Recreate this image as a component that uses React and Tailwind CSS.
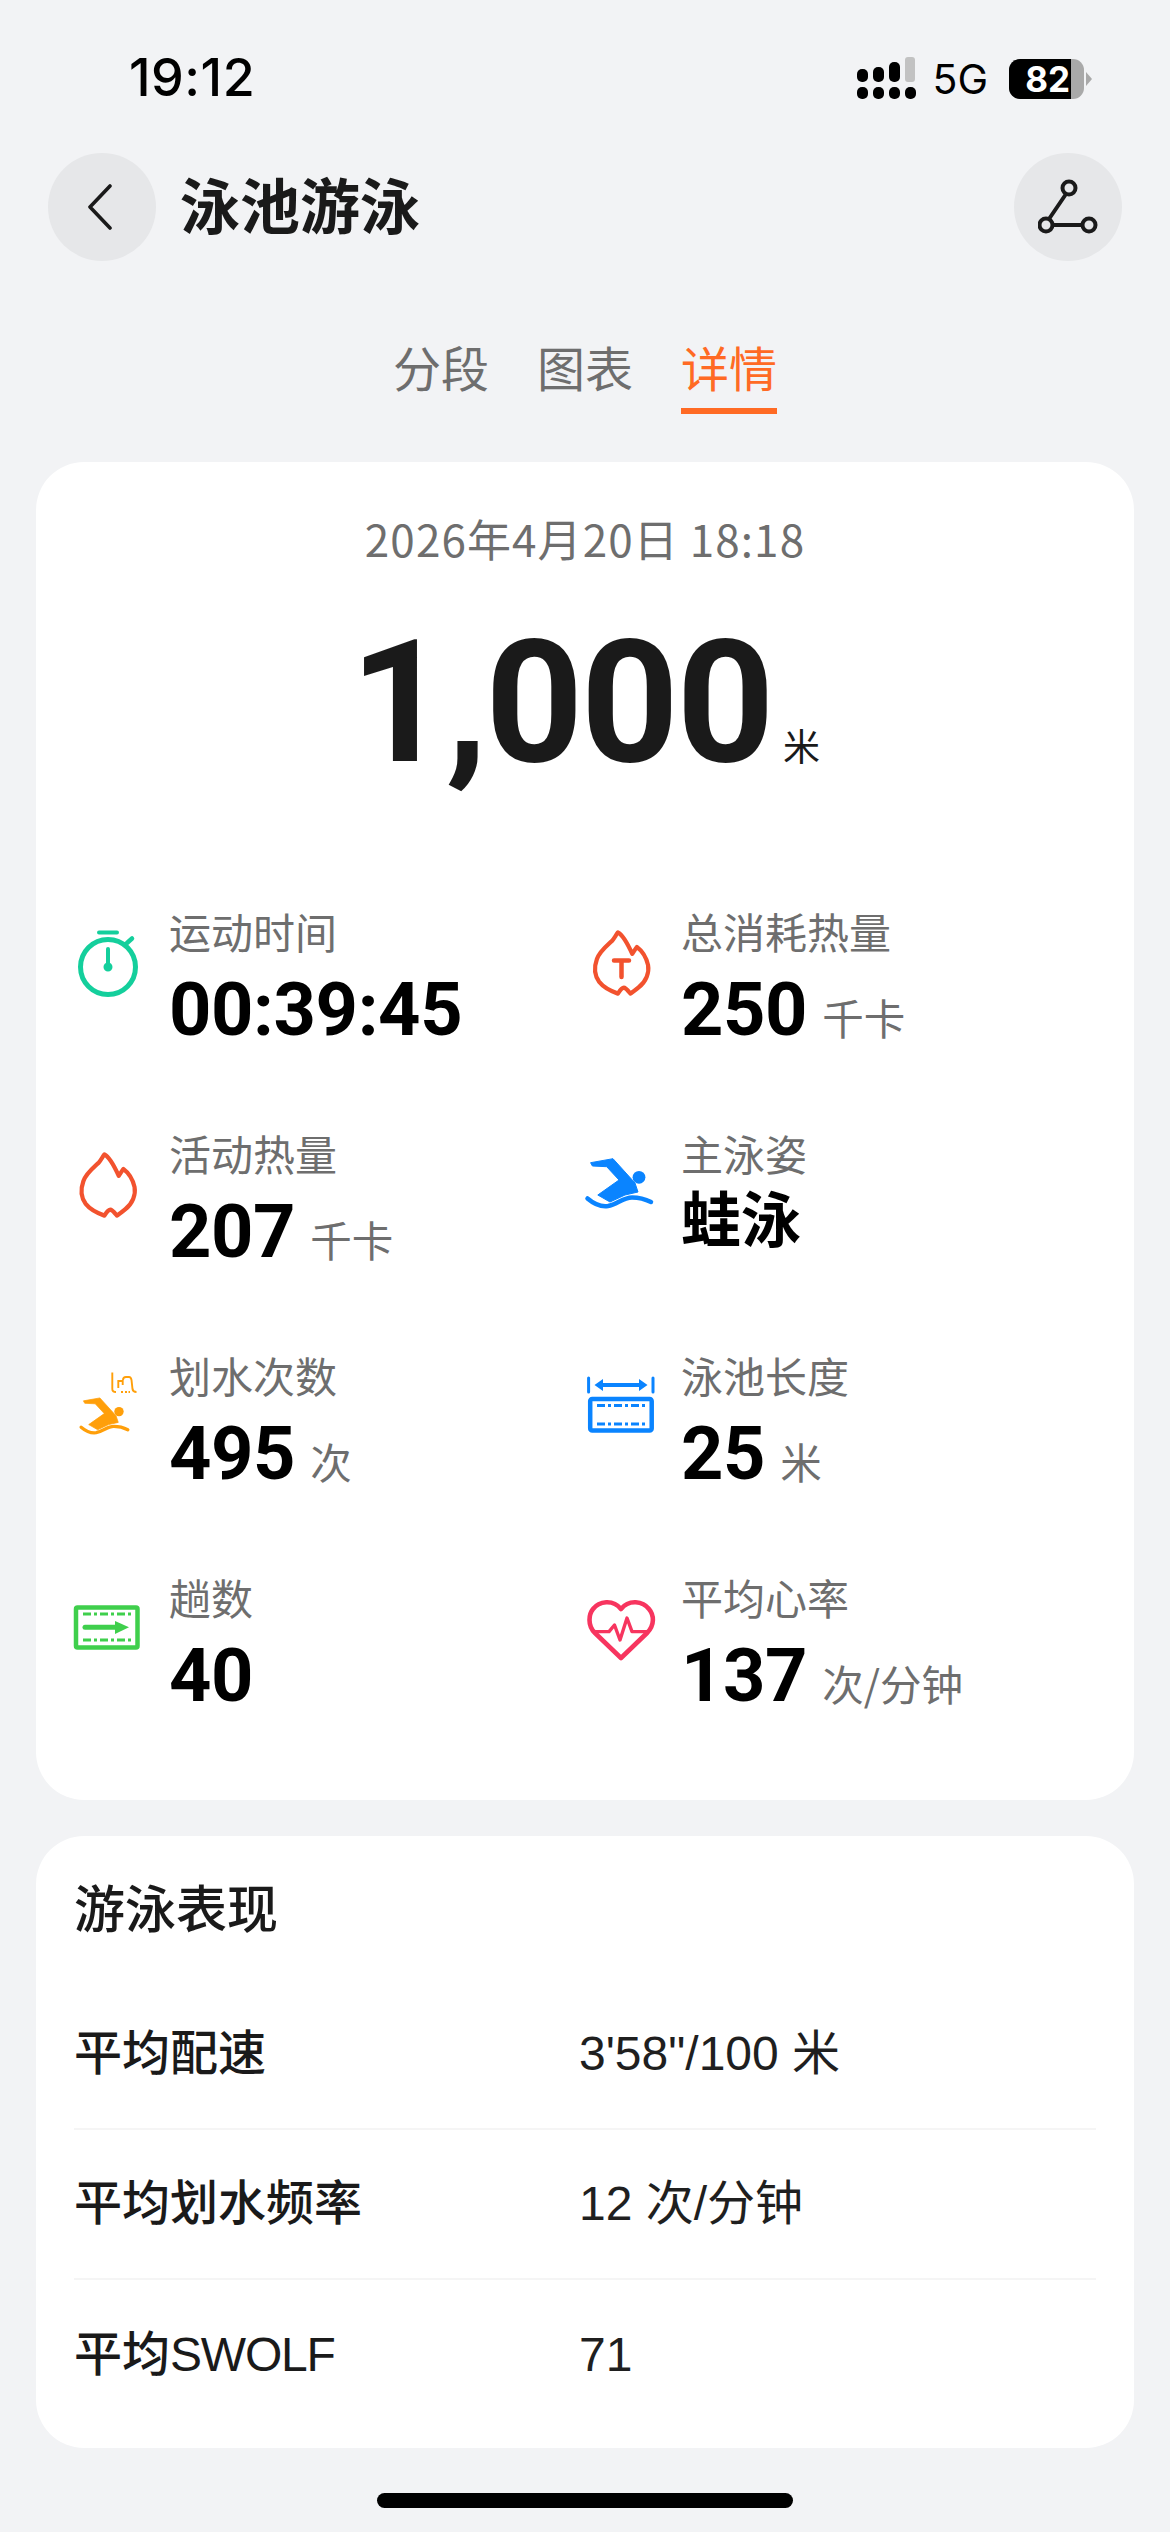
const CJK = '"Noto Sans CJK SC", sans-serif';
const MIX = '"Liberation Sans", "Noto Sans CJK SC", sans-serif';

function Swimmer({ color }) {
  return (
    <g fill={color}>
      <path d="M5.6 10.7 L28 6.7 L50 31 L53 40 L40 43 L25 50 L12.8 43 L34 28 L21.7 14.7 L7.4 14 Z" strokeLinejoin="round" stroke={color} strokeWidth="1" />
      <circle cx="54" cy="25.3" r="6.4" />
      <path d="M2.5 46.5 C9 52 16 55 23 54 C32 52.5 38 45.5 47 45.5 C54 45.5 60 47 66 50" fill="none" stroke={color} strokeWidth="4.5" strokeLinecap="round" />
    </g>
  );
}

const flame = "M31.6 1.5 C37 4 42 13 47 23.5 C49 21 50.5 18 52 16.5 C57 20 62 27 64 35 C65.5 43 62 52 54 58 C50 61 47 63.5 45 64.5 C42 61 40 58.5 38 58.5 C35.5 58.5 33.5 61.5 31.6 64.5 C24 62 16 58 11.5 52.5 C6.5 46 6 37 9 29 C12 21 20 15 25 10.5 C27.5 8 29.5 4 31.6 1.5 Z";

const icons = {
  watch: (
    <g fill="none" stroke="#14cf9c" strokeWidth="5" strokeLinecap="round">
      <circle cx="36" cy="37" r="27.5" />
      <path d="M27 2.5 H45" strokeWidth="4" />
      <path d="M36 19 V37" strokeWidth="4" />
      <path d="M55 13 L60 8.5" strokeWidth="4.5" />
      <circle cx="36" cy="37" r="2" fill="#14cf9c" />
    </g>
  ),
  flameT: (
    <g fill="none" stroke="#f2522e" strokeWidth="4.5" strokeLinejoin="round" strokeLinecap="round">
      <path d={flame} transform="translate(38 33) scale(.93 .97) translate(-36 -33)" />
      <path d="M30 30.5 H45 M37.5 30.5 V47" />
    </g>
  ),
  flame: <path d={flame} transform="translate(36.5 33) scale(.93 .97) translate(-36 -33)" fill="none" stroke="#f2522e" strokeWidth="4.5" strokeLinejoin="round" />,
  swim: <g transform="translate(1 0)"><Swimmer color="#0a84ff" /></g>,
  stroke: (
    <g>
      <g transform="translate(7.3 19) scale(.735)"><Swimmer color="#ff9f0a" /></g>
      <path d="M40.3 -1.5 V15 Q40.3 18 44 18 M46.3 14 V7 H50.7 V11 M51 6 Q51 3 54 3 H57 Q59 3 59.5 6 L60.5 15 Q61 18 64.5 18" fill="none" stroke="#ff9f0a" strokeWidth="1.9" />
      <path d="M49 18 H51 M53 18 H55 M56.5 18 H58" fill="none" stroke="#ff9f0a" strokeWidth="1.9" />
    </g>
  ),
  pool: (
    <g fill="none" stroke="#0a84ff">
      <path d="M4.6 4 V18 M69 4 V18" strokeWidth="3" strokeLinecap="round" />
      <path d="M14 11 H60" strokeWidth="4" />
      <path d="M10.5 11 L19 5 V17 Z M63.5 11 L55 5 V17 Z" fill="#0a84ff" stroke="none" />
      <rect x="6.2" y="25" width="61.5" height="31.5" rx="2" strokeWidth="4.5" />
      <path d="M13 31.5 H62 M13 50 H62" strokeWidth="3" strokeDasharray="8 3 3 3" />
    </g>
  ),
  laps: (
    <g fill="none" stroke="#3fcf4c">
      <rect x="4" y="11.5" width="61.5" height="40" rx="1.5" strokeWidth="4.5" />
      <path d="M11 18 H59 M11 44 H59" strokeWidth="3" strokeDasharray="8 3 3 3" />
      <path d="M13 31.3 H46" strokeWidth="5" strokeLinecap="round" />
      <path d="M43 25 L57 31.3 L43 38 Z" fill="#3fcf4c" stroke="none" />
    </g>
  ),
  heart: (
    <g fill="none" stroke="#f7355f" strokeLinejoin="round" strokeLinecap="round">
      <path d="M37 62 L11 37 C3 29 5 18 9 13 C15 5 29 3 37 13 C45 3 59 5 65 13 C70 19 71 29 63 37 Z" strokeWidth="4.6" />
      <path d="M10 35.6 H25 L30.5 29 L36 44 L43 22 L48 35.6 H64" strokeWidth="3.4" />
    </g>
  ),
};

const stats = [
  ["watch", "运动时间", "00:39:45", ""],
  ["flameT", "总消耗热量", "250", "千卡"],
  ["flame", "活动热量", "207", "千卡"],
  ["swim", "主泳姿", "蛙泳", ""],
  ["stroke", "划水次数", "495", "次"],
  ["pool", "泳池长度", "25", "米"],
  ["laps", "趟数", "40", ""],
  ["heart", "平均心率", "137", "次/分钟"],
];

function Stat({ icon, label, value, unit }) {
  const isCjk = value === "蛙泳";
  return (
    <div className="flex h-[222px] w-[512px] gap-[25px]">
      <svg viewBox="0 0 72 80" className="mt-[22px] h-[80px] w-[72px] shrink-0 overflow-visible">{icons[icon]}</svg>
      <div className="flex flex-col">
        <div className="h-[52px] text-[42px] leading-[46px] text-[#6e6e6e]" style={{ fontFamily: CJK }}>{label}</div>
        <div className="mt-[10px] flex h-[80px] items-baseline">
          {isCjk ? (
            <span className="text-[60px] font-bold leading-[48px] text-black" style={{ fontFamily: CJK }}>{value}</span>
          ) : (
            <span className="text-[74px] font-bold leading-[80px] tracking-[-0.4px] text-black" style={{ fontFamily: "Roboto, sans-serif" }}>{value}</span>
          )}
          {unit && <span className="ml-[15px] text-[41.5px] leading-[52px] text-[#6e6e6e]" style={{ fontFamily: CJK }}>{unit}</span>}
        </div>
      </div>
    </div>
  );
}

function Row({ label, value, border }) {
  return (
    <div className={`flex h-[150px] items-center ${border ? "border-b-2 border-[#f5f5f5]" : ""}`}>
      <div className="w-[505px] text-[48px] font-medium text-[#1a1a1a]" style={{ fontFamily: MIX }}>{label}</div>
      <div className="text-[48px] text-[#1f1f1f]" style={{ fontFamily: MIX }}>{value}</div>
    </div>
  );
}

export default function App() {
  return (
    <div className="flex h-[2532px] w-[1170px] flex-col overflow-hidden bg-[#f2f3f5]" style={{ fontFamily: CJK }}>
      {/* status bar */}
      <div className="flex h-[153px] items-start justify-between pl-[129px] pr-[77px] pt-[46px]">
        <div className="text-[52px] font-medium leading-[64px] tracking-[0.5px] text-black" style={{ fontFamily: "Inter, sans-serif" }}>19:12</div>
        <div className="mt-[11px] flex items-center">
          <svg width="60" height="44" viewBox="0 0 60 44" className="mr-[16px]">
            <g fill="#000">
              <rect x="1" y="12" width="11" height="13" rx="5" />
              <rect x="17" y="10" width="11" height="15" rx="5" />
              <rect x="33" y="5" width="11" height="20" rx="5" />
              <rect x="1" y="30" width="11" height="12" rx="5" />
              <rect x="17" y="30" width="11" height="12" rx="5" />
              <rect x="33" y="30" width="11" height="12" rx="5" />
              <rect x="49" y="30" width="11" height="12" rx="5" />
            </g>
            <rect x="49" y="0" width="10" height="25" rx="3" fill="#c2c2c2" />
          </svg>
          <div className="mr-[21px] text-[41px] leading-[44px] text-black" style={{ fontFamily: "Inter, sans-serif" }}>5G</div>
          <div className="relative flex h-[40px] w-[75px] overflow-hidden rounded-[11px] bg-[#a9a9a9]">
            <div className="flex h-full w-[62px] items-center justify-end bg-black pr-[1px] text-[35px] font-bold text-white" style={{ fontFamily: "Inter, sans-serif" }}>82</div>
          </div>
          <svg width="7" height="14" viewBox="0 0 7 14" className="ml-[2px]"><path d="M0 0 L6 7 L0 14 Z" fill="#a9a9a9" /></svg>
        </div>
      </div>

      {/* header */}
      <div className="flex h-[108px] items-center justify-between px-[48px]">
        <div className="flex items-center">
          <div className="flex h-[108px] w-[108px] items-center justify-center rounded-full bg-[#e6e7e9] pr-[4px]">
            <svg width="24" height="46" viewBox="0 0 24 46" fill="none" stroke="#1a1a1a" strokeWidth="3.6" strokeLinecap="round" strokeLinejoin="round"><path d="M22 2 L2 23 L22 44" /></svg>
          </div>
          <div className="ml-[24px] pb-[8px] text-[60px] font-bold leading-[80px] text-[#1a1a1a]">泳池游泳</div>
        </div>
        <div className="flex h-[108px] w-[108px] items-center justify-center rounded-full bg-[#e6e7e9]">
          <svg width="60" height="60" viewBox="0 0 60 60" fill="none" stroke="#1a1a1a" strokeWidth="4"><circle cx="31" cy="11" r="6.5" /><circle cx="8" cy="48" r="6.5" /><circle cx="51" cy="48" r="6.5" /><path d="M28 17 L11 42 M14.5 48 H44.5" /></svg>
        </div>
      </div>

      {/* tabs */}
      <div className="mb-[48px] mt-[78px] flex h-[75px] items-start justify-center gap-[48px] text-[48px] leading-[54px]">
        <div className="text-[#6e6e6e]">分段</div>
        <div className="text-[#6e6e6e]">图表</div>
        <div className="h-[75px] border-b-[6px] border-[#ff6a24] text-[#ff6a24]">详情</div>
      </div>

      {/* main card */}
      <div className="mx-[36px] h-[1338px] shrink-0 rounded-[48px] bg-white">
        <div className="pt-[46px] text-center text-[44px] leading-[60px] tracking-[1.1px] text-[#6e6e6e]">2026年4月20日 18:18</div>
        <div className="mt-[50px] flex h-[170px] items-baseline justify-center">
          <span className="text-[171px] font-bold leading-[170px] tracking-[-2.5px] text-[#1a1a1a]" style={{ fontFamily: "Roboto, sans-serif" }}>1,000</span>
          <span className="ml-[11px] text-[37px] leading-[60px] text-[#1a1a1a]">米</span>
        </div>
        <div className="ml-[36px] mt-[120px] grid w-[1024px] grid-cols-2">
          {stats.map(([i, l, v, u]) => <Stat key={l} icon={i} label={l} value={v} unit={u} />)}
        </div>
      </div>

      {/* performance card */}
      <div className="mx-[36px] mt-[36px] h-[612px] shrink-0 rounded-[48px] bg-white pl-[38px] pr-[38px]">
        <div className="flex h-[144px] items-center pb-[5px] text-[51px] font-medium leading-[60px] text-[#1a1a1a]">游泳表现</div>
        <Row label="平均配速" value={`3'58"/100 米`} border />
        <Row label="平均划水频率" value="12 次/分钟" border />
        <Row label={<>平均<span className="tracking-[-1.2px]">SWOLF</span></>} value="71" />
      </div>

      {/* home indicator */}
      <div className="mt-[45px] h-[15px] w-[416px] self-center rounded-[8px] bg-black" />
    </div>
  );
}
